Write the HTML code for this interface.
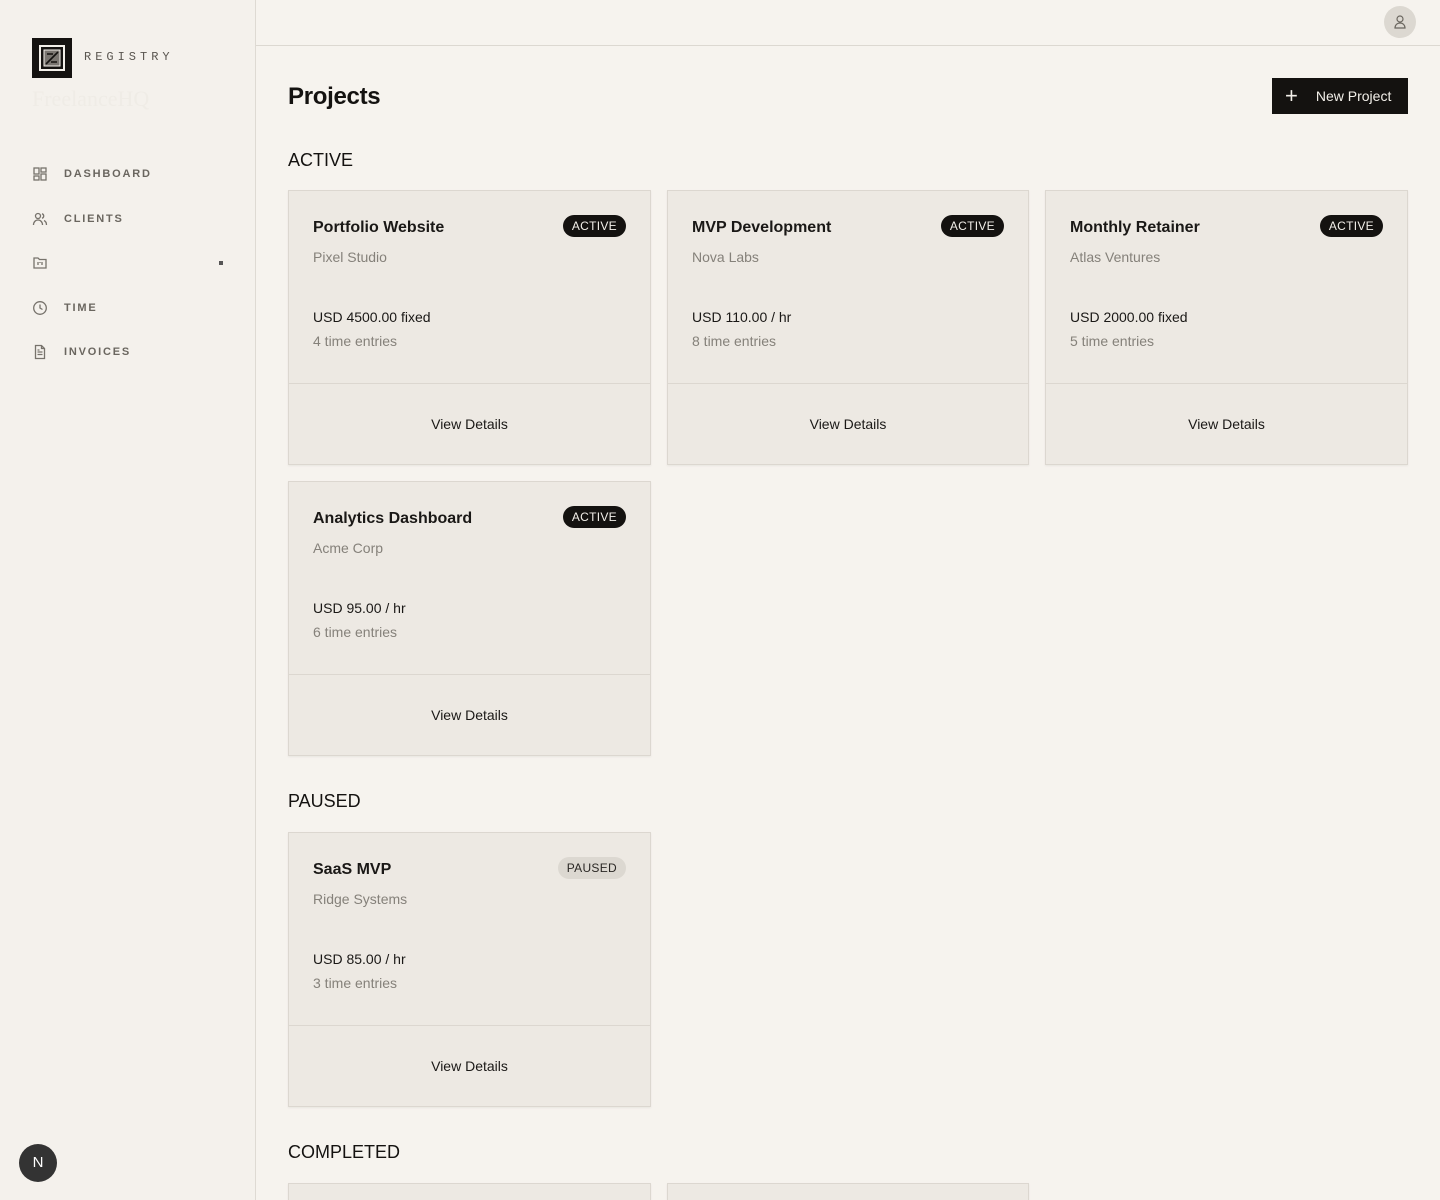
<!DOCTYPE html>
<html><head><meta charset="utf-8"><style>
*{box-sizing:border-box;margin:0;padding:0}
html{width:1440px;height:1200px;overflow:hidden}
body{width:1440px;height:1200px;overflow:hidden;background:#f6f3ee;font-family:"Liberation Sans",sans-serif;color:#141210;position:relative}
.side{position:absolute;left:0;top:0;width:256px;height:1200px;background:#f4f1ec;border-right:1px solid #dedad3}
.logo{position:absolute;left:32px;top:38px;width:40px;height:40px;background:#141210}
.brand{position:absolute;left:84px;top:50px;font-family:"Liberation Mono",monospace;font-size:12px;letter-spacing:4px;color:#5a5650}
.ghost{position:absolute;left:32px;top:86px;font-family:"Liberation Serif",serif;font-size:22px;color:#efece6}
.nav{position:absolute;left:32px;display:flex;align-items:center;font-size:11px;font-weight:bold;letter-spacing:1.8px;color:#6a665f}
.nav svg{width:16px;height:16px;margin-right:16px;stroke:#77736c;fill:none;stroke-width:1.3}
.top{position:absolute;left:256px;top:0;right:0;height:46px;border-bottom:1px solid #dcd8d1}
.avatar{position:absolute;right:24px;top:6px;width:32px;height:32px;border-radius:50%;background:#dcd8d1}
h1{position:absolute;left:288px;top:83px;font-size:24px;font-weight:bold;letter-spacing:-.3px}
.btn{position:absolute;left:1272px;top:78px;width:136px;height:36px;background:#141210;color:#f2efe9;font-size:14px;display:flex;align-items:center}
.sec{position:absolute;left:288px;font-size:18px;line-height:20px;color:#141210}
.card{position:absolute;width:363px;height:275px;background:#ede9e3;border:1px solid #dcd7d0;box-shadow:0 1px 2px rgba(0,0,0,.06)}
.card .t{position:absolute;left:24px;top:28px;font-size:16px;font-weight:bold;color:#1a1816}
.card .c{position:absolute;left:24px;top:58px;font-size:14px;color:#85817a}
.card .p{position:absolute;left:24px;top:118px;font-size:14px;color:#1a1816}
.card .e{position:absolute;left:24px;top:142px;font-size:14px;color:#85817a}
.card .f{position:absolute;left:0;right:0;top:192px;bottom:0;border-top:1px solid #dcd7d0;display:flex;align-items:center;justify-content:center;font-size:14px;color:#1a1816}
.badge{position:absolute;right:24px;top:24px;height:22px;padding:0 9px;border-radius:11px;background:#141210;color:#f2efe9;font-size:12px;line-height:22px;letter-spacing:.3px}
.badge.ps{background:#dcd8d1;color:#2a2724}
.nx{position:absolute;left:19px;top:1144px;width:38px;height:38px;border-radius:50%;background:#333;color:#fff;font-size:15px;text-align:center;line-height:38px}
</style></head><body>
<div class="side">
<div class="logo"><svg width="40" height="40" viewBox="0 0 40 40"><rect x="8" y="8" width="24" height="24" fill="none" stroke="#f2efe9" stroke-width="2"/><rect x="12" y="12" width="16" height="16" fill="#7a7671" stroke="#f2efe9" stroke-width="1"/><path d="M14 26L26 14M15 16h6M19 24h6" stroke="#141210" stroke-width="1.6"/></svg></div>
<div class="brand">REGISTRY</div>
<div class="ghost">FreelanceHQ</div>
<div class="nav" style="top:166px"><svg viewBox="0 0 16 16"><rect x="2" y="2" width="5" height="6"/><rect x="9" y="2" width="5" height="4"/><rect x="2" y="10" width="5" height="4"/><rect x="9" y="8" width="5" height="6"/></svg>DASHBOARD</div>
<div class="nav" style="top:211px"><svg viewBox="0 0 16 16"><circle cx="6" cy="5" r="2.5"/><path d="M1.5 14c0-3 2-5 4.5-5s4.5 2 4.5 5M10 2.7a2.4 2.4 0 010 4.6M12 9.5c1.5.7 2.5 2.3 2.5 4.5"/></svg>CLIENTS</div>
<div class="nav" style="top:255px"><svg viewBox="0 0 16 16"><path d="M2 3h4l1.5 1.5H14V13H2z"/><path d="M6 7v3M8 7v1M10 7v3"/></svg></div>
<div style="position:absolute;left:219px;top:261px;width:4px;height:4px;background:#555"></div>
<div class="nav" style="top:300px"><svg viewBox="0 0 16 16"><circle cx="8" cy="8" r="6.3"/><path d="M8 4.5V8l2.5 1.5"/></svg>TIME</div>
<div class="nav" style="top:344px"><svg viewBox="0 0 16 16"><path d="M3.5 1.5h6l3 3v10h-9z"/><path d="M9.5 1.5v3h3M5.5 8h5M5.5 10.5h5M5.5 6h2"/></svg>INVOICES</div>
<div class="nx">N</div>
</div>
<div class="top"><div class="avatar"><svg width="32" height="32" viewBox="0 0 32 32" fill="none" stroke="#6a665f" stroke-width="1.2"><circle cx="16" cy="13" r="3"/><path d="M11 22c0-3 2.2-5 5-5s5 2 5 5z"/></svg></div></div>
<h1>Projects</h1>
<div class="btn"><span style="font-size:22px;font-weight:300;margin:0 18px 0 13px;line-height:1">+</span>New Project</div>
<div class="sec" style="top:150px">ACTIVE</div>
<div class="card" style="left:288px;top:190px"><div class="t">Portfolio Website</div><div class="badge">ACTIVE</div><div class="c">Pixel Studio</div><div class="p">USD 4500.00 fixed</div><div class="e">4 time entries</div><div class="f">View Details</div></div>
<div class="card" style="left:667px;top:190px;width:362px"><div class="t">MVP Development</div><div class="badge">ACTIVE</div><div class="c">Nova Labs</div><div class="p">USD 110.00 / hr</div><div class="e">8 time entries</div><div class="f">View Details</div></div>
<div class="card" style="left:1045px;top:190px"><div class="t">Monthly Retainer</div><div class="badge">ACTIVE</div><div class="c">Atlas Ventures</div><div class="p">USD 2000.00 fixed</div><div class="e">5 time entries</div><div class="f">View Details</div></div>
<div class="card" style="left:288px;top:481px"><div class="t">Analytics Dashboard</div><div class="badge">ACTIVE</div><div class="c">Acme Corp</div><div class="p">USD 95.00 / hr</div><div class="e">6 time entries</div><div class="f">View Details</div></div>
<div class="sec" style="top:791px">PAUSED</div>
<div class="card" style="left:288px;top:832px"><div class="t">SaaS MVP</div><div class="badge ps">PAUSED</div><div class="c">Ridge Systems</div><div class="p">USD 85.00 / hr</div><div class="e">3 time entries</div><div class="f">View Details</div></div>
<div class="sec" style="top:1142px">COMPLETED</div>
<div class="card" style="left:288px;top:1183px;height:17px;border-bottom:none"></div>
<div class="card" style="left:667px;top:1183px;width:362px;height:17px;border-bottom:none"></div>
</body></html>
